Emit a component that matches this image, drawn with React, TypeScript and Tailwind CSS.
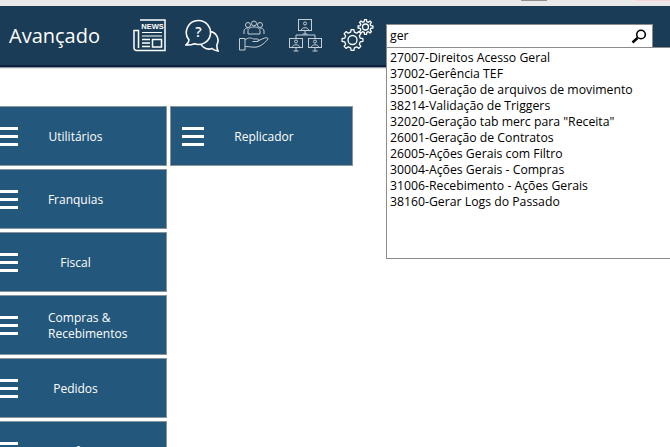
const leftMenu = [
  { label: ['Utilitários'], textClass: 'text-center' },
  { label: ['Franquias'], textClass: 'text-center' },
  { label: ['Fiscal'], textClass: 'text-center' },
  { label: ['Compras &', 'Recebimentos'], textClass: 'pl-[30px]' },
  { label: ['Pedidos'], textClass: 'text-center' },
  { label: ['Configurações'], textClass: 'pl-[35px]' },
]

const results = [
  '27007-Direitos Acesso Geral',
  '37002-Gerência TEF',
  '35001-Geração de arquivos de movimento',
  '38214-Validação de Triggers',
  '32020-Geração tab merc para "Receita"',
  '26001-Geração de Contratos',
  '26005-Ações Gerais com Filtro',
  '30004-Ações Gerais - Compras',
  '31006-Recebimento - Ações Gerais',
  '38160-Gerar Logs do Passado',
]

function MenuButton({ label, textClass }: { label: string[]; textClass: string }) {
  return (
    <div className="flex h-[60px] w-[183px] shrink-0 items-center border border-[#8a949c] bg-[#24577c] pl-[11px] text-[12px] leading-[16px] text-white">
      <div className="flex w-[22px] shrink-0 flex-col gap-[5px]">
        <span className="h-[3px] bg-white" />
        <span className="h-[3px] bg-white" />
        <span className="h-[3px] bg-white" />
      </div>
      <div className={`flex-1 pr-[33px] pt-[2px] ${textClass}`}>
        {label.map((line) => (
          <div key={line}>{line}</div>
        ))}
      </div>
    </div>
  )
}

function NewsIcon() {
  return (
    <svg width="33" height="33" viewBox="0 0 33 33" fill="none" stroke="#fff" strokeWidth="1.5">
      <path d="M7 1h25v30.500H3.500A2.500 2.500 0 0 1 1 29V11.500h4.500V29" />
      <text x="19.500" y="10" textAnchor="middle" fontSize="7.500" fontWeight="700" fill="#fff" stroke="none" fontFamily="'Liberation Sans', sans-serif">NEWS</text>
      <path d="M9 13.500h20M9 17h20" strokeWidth="1" />
      <path d="M9 20.500h8M9 24h8M9 27.500h8" />
      <rect x="19.500" y="20.500" width="9" height="7.500" />
    </svg>
  )
}

function ChatIcon() {
  return (
    <svg width="34" height="34" viewBox="0 0 34 34" fill="none" stroke="#fff" strokeWidth="1.600">
      <path d="M15 22a9 9 0 1 1 17 3.500c-.3 2 .2 4.500 1 6.500-2.500-.4-4.500-1.200-6-2.500a9 9 0 0 1-12-7.500Z" />
      <path
        d="M13.500 1.500a12 12 0 1 1-4 23.300c-2.500 1-5 1.400-8.500 1.200 1.800-1.400 2.800-3 3-5A12 12 0 0 1 13.500 1.500Z"
        fill="#1a3c57"
      />
      <text x="13.500" y="18" textAnchor="middle" fontSize="14" fontWeight="600" fill="#fff" stroke="none" fontFamily="'Open Sans', sans-serif">?</text>
    </svg>
  )
}

function PeopleHandIcon() {
  return (
    <svg width="30" height="31" viewBox="0 0 30 31" fill="none" stroke="#c5ced5" strokeWidth="1">
      <circle cx="9" cy="5" r="2.500" />
      <circle cx="15" cy="3.500" r="2.500" />
      <circle cx="21" cy="5" r="2.500" />
      <path d="M5 14v-3c0-2 2-3 4-3M25 14v-3c0-2-2-3-4-3" />
      <path d="M9 14v-3.500c0-2 2.500-3.500 6-3.500s6 1.500 6 3.500V14Z" />
      <path d="M.5 18.500h5.500V30H.5Z" />
      <path d="M6 20c3-2.500 6-2.500 8.500-1h4c1.800 0 1.800 2.500 0 2.500h-5M18.500 21l7-3c2.500-.7 4 .3 3.500 1-3 4-7 7-11 8-4 .6-8-.5-11.500-.5" />
    </svg>
  )
}

function Screen({ x, y, h }: { x: number; y: number; h: number }) {
  return (
    <g transform={`translate(${x} ${y})`}>
      <rect x="0.500" y="0.500" width="13" height={h} />
      <circle cx="7" cy={h / 2 - 1} r="1.500" />
      <path d={`M3.500 ${h}c0-3 7-3 7 0M4.500 ${h + 4}h5M7 ${h + 1}v3`} />
    </g>
  )
}

function NetworkIcon() {
  return (
    <svg width="33" height="33" viewBox="0 0 33 33" fill="none" stroke="#c5ced5" strokeWidth="1">
      <Screen x={9} y={0} h={11} />
      <path d="M7 19v-3h19v3" />
      <Screen x={0} y={19} h={9} />
      <Screen x={19} y={19} h={9} />
    </svg>
  )
}

// gear outline built from the tooth count, the drawing has two of these
function gearPath(cx: number, cy: number, outer: number, inner: number, teeth: number) {
  const step = (Math.PI * 2) / teeth
  const points: string[] = []
  for (let i = 0; i < teeth; i++) {
    const a = i * step
    const corners: [number, number][] = [
      [inner, a - step * 0.3],
      [outer, a - step * 0.17],
      [outer, a + step * 0.17],
      [inner, a + step * 0.3],
    ]
    corners.forEach(([r, t]) => {
      points.push(`${(cx + r * Math.cos(t)).toFixed(2)} ${(cy + r * Math.sin(t)).toFixed(2)}`)
    })
  }
  return `M${points.join('L')}Z`
}

function GearsIcon() {
  return (
    <svg width="33" height="33" viewBox="0 0 33 33" fill="none" stroke="#fff" strokeWidth="1.300" strokeLinejoin="round">
      <path d={gearPath(24.500, 8, 7.500, 5.500, 8)} />
      <circle cx="24.500" cy="8" r="3" />
      <path d={gearPath(11.500, 21, 10.500, 8, 8)} fill="#1a3c57" />
      <circle cx="11.500" cy="21" r="4.500" />
    </svg>
  )
}

function SearchGlyph() {
  return (
    <svg width="16" height="15" viewBox="0 0 16 15" fill="none" stroke="#000">
      <circle cx="10" cy="5.500" r="4.300" strokeWidth="1.600" />
      <path d="M6.500 9 1.500 13.500" strokeWidth="2.600" />
    </svg>
  )
}

export default function App() {
  return (
    <div className="relative h-[447px] w-[670px] overflow-hidden bg-white font-['Open_Sans','Liberation_Sans',sans-serif]">
      <div className="relative h-[6px] bg-[#e9e9e9]">
        <div className="absolute left-[521px] top-0 h-[1px] w-[26px] bg-[#8f8f8f]" />
        <div className="absolute left-[636px] top-0 h-[1px] w-[34px] bg-[#f6d5d5]" />
      </div>
      <header className="flex h-[59px] items-center bg-[#1a3c57] pl-[9px]">
        <h1 className="w-[124px] pt-[1px] text-[20px] font-normal text-white">Avançado</h1>
        <div className="flex items-center">
          <NewsIcon />
          <div className="ml-[19px]">
            <ChatIcon />
          </div>
          <div className="ml-[20px]">
            <PeopleHandIcon />
          </div>
          <div className="ml-[20px]">
            <NetworkIcon />
          </div>
          <div className="ml-[19px]">
            <GearsIcon />
          </div>
        </div>
      </header>
      <div className="h-[2px] bg-[#0d1f3a]" />
      <div className="h-[1px] bg-[#8b9aa6]" />
      <div className="h-[1px] bg-[#e3e3e3]" />

      <main className="ml-[-16px] mt-[37px] flex gap-[3px]">
        <div className="flex flex-col gap-[3px]">
          {leftMenu.map((item) => (
            <MenuButton key={item.label[0]} label={item.label} textClass={item.textClass} />
          ))}
        </div>
        <div>
          <MenuButton label={['Replicador']} textClass="pl-[5px] text-center" />
        </div>
      </main>

      <div className="absolute left-[386px] top-[24px] w-[400px]">
        <div className="flex h-[24px] w-[267px] items-center justify-between border border-[#8c8c8c] bg-white pl-[3px] pr-[5px] text-[12.250px] text-black">
          <span className="pt-[1px]">ger</span>
          <SearchGlyph />
        </div>
        <div className="mt-[-1px] h-[212px] border border-[#8c8c8c] bg-white pl-[3px] pt-[2px] text-[12.250px] leading-[16px] text-black">
          {results.map((r) => (
            <div key={r}>{r}</div>
          ))}
        </div>
      </div>
    </div>
  )
}
